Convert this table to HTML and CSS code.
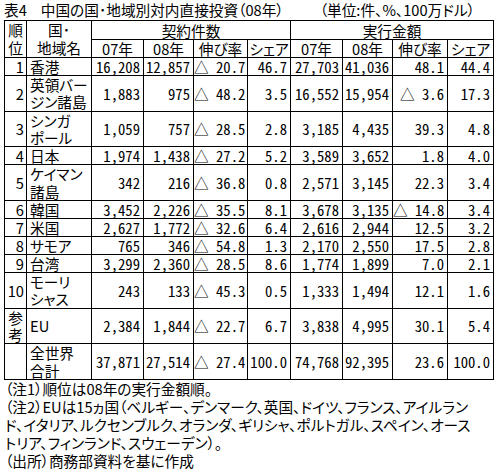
FILE: index.html
```html
<!DOCTYPE html>
<html lang="ja">
<head>
<meta charset="utf-8">
<title>表4 中国の国・地域別対内直接投資</title>
<link rel="stylesheet" href="styles.css">
</head>
<body>
<div class="page">
  <div class="title">
    <span class="tno">表4</span>
    <span class="main">中国の国･地域別対内直接投資（08年）</span>
    <span class="unit">（単位:件、%、100万ドル）</span>
  </div>
  <table class="tbl">
    <colgroup>
      <col class="w-rank"><col class="w-name">
      <col class="w-a"><col class="w-b"><col class="w-c"><col class="w-d">
      <col class="w-e"><col class="w-f"><col class="w-g"><col class="w-h">
    </colgroup>
    <thead>
      <tr class="h1">
        <th rowspan="2" class="two">順<br>位</th>
        <th rowspan="2" class="two">国･<br>地域名</th>
        <th colspan="4">契約件数</th>
        <th colspan="4">実行金額</th>
      </tr>
      <tr class="h2">
        <th>07年</th><th>08年</th><th>伸び率</th><th>シェア</th>
        <th>07年</th><th>08年</th><th>伸び率</th><th>シェア</th>
      </tr>
    </thead>
    <tbody>
      <tr class="s"><td class="rk">1</td><td class="nm">香港</td><td class="n">16,208</td><td class="n">12,857</td><td class="n">△ 20.7</td><td class="n">46.7</td><td class="n">27,703</td><td class="n">41,036</td><td class="n">48.1</td><td class="n">44.4</td></tr>
      <tr class="d"><td class="rk">2</td><td class="nm">英領バー<br>ジン諸島</td><td class="n">1,883</td><td class="n">975</td><td class="n">△ 48.2</td><td class="n">3.5</td><td class="n">16,552</td><td class="n">15,954</td><td class="n">△ 3.6</td><td class="n">17.3</td></tr>
      <tr class="d"><td class="rk">3</td><td class="nm">シンガ<br>ポール</td><td class="n">1,059</td><td class="n">757</td><td class="n">△ 28.5</td><td class="n">2.8</td><td class="n">3,185</td><td class="n">4,435</td><td class="n">39.3</td><td class="n">4.8</td></tr>
      <tr class="s"><td class="rk">4</td><td class="nm">日本</td><td class="n">1,974</td><td class="n">1,438</td><td class="n">△ 27.2</td><td class="n">5.2</td><td class="n">3,589</td><td class="n">3,652</td><td class="n">1.8</td><td class="n">4.0</td></tr>
      <tr class="d"><td class="rk">5</td><td class="nm">ケイマン<br>諸島</td><td class="n">342</td><td class="n">216</td><td class="n">△ 36.8</td><td class="n">0.8</td><td class="n">2,571</td><td class="n">3,145</td><td class="n">22.3</td><td class="n">3.4</td></tr>
      <tr class="s"><td class="rk">6</td><td class="nm">韓国</td><td class="n">3,452</td><td class="n">2,226</td><td class="n">△ 35.5</td><td class="n">8.1</td><td class="n">3,678</td><td class="n">3,135</td><td class="n">△ 14.8</td><td class="n">3.4</td></tr>
      <tr class="s"><td class="rk">7</td><td class="nm">米国</td><td class="n">2,627</td><td class="n">1,772</td><td class="n">△ 32.6</td><td class="n">6.4</td><td class="n">2,616</td><td class="n">2,944</td><td class="n">12.5</td><td class="n">3.2</td></tr>
      <tr class="s"><td class="rk">8</td><td class="nm">サモア</td><td class="n">765</td><td class="n">346</td><td class="n">△ 54.8</td><td class="n">1.3</td><td class="n">2,170</td><td class="n">2,550</td><td class="n">17.5</td><td class="n">2.8</td></tr>
      <tr class="s"><td class="rk">9</td><td class="nm">台湾</td><td class="n">3,299</td><td class="n">2,360</td><td class="n">△ 28.5</td><td class="n">8.6</td><td class="n">1,774</td><td class="n">1,899</td><td class="n">7.0</td><td class="n">2.1</td></tr>
      <tr class="d"><td class="rk">10</td><td class="nm">モーリ<br>シャス</td><td class="n">243</td><td class="n">133</td><td class="n">△ 45.3</td><td class="n">0.5</td><td class="n">1,333</td><td class="n">1,494</td><td class="n">12.1</td><td class="n">1.6</td></tr>
      <tr class="d"><td class="rk ref">参<br>考</td><td class="nm">EU</td><td class="n">2,384</td><td class="n">1,844</td><td class="n">△ 22.7</td><td class="n">6.7</td><td class="n">3,838</td><td class="n">4,995</td><td class="n">30.1</td><td class="n">5.4</td></tr>
      <tr class="d"><td class="rk"></td><td class="nm">全世界<br>合計</td><td class="n">37,871</td><td class="n">27,514</td><td class="n">△ 27.4</td><td class="n">100.0</td><td class="n">74,768</td><td class="n">92,395</td><td class="n">23.6</td><td class="n">100.0</td></tr>
    </tbody>
  </table>
  <div class="notes">
    <p>（注1）順位は08年の実行金額順。</p>
    <p>（注2）EUは15ヵ国（ベルギー、デンマーク、英国、ドイツ、フランス、アイルラン</p>
    <p>ド、イタリア、ルクセンブルク、オランダ、ギリシャ、ポルトガル、スペイン、オース</p>
    <p>トリア、フィンランド、スウェーデン）。</p>
    <p>（出所）商務部資料を基に作成</p>
  </div>
</div>
</body>
</html>
```

FILE: styles.css
```css
html, body {
  margin: 0;
  padding: 0;
  background: #fff;
}

body {
  color: #000;
  font-family: "Noto Sans CJK JP", sans-serif;
  font-size: 14.67px;
  font-feature-settings: "palt";
}

.page {
  padding: 1px 0 0 4px;
  width: 490px;
}

.title {
  display: flex;
  height: 19px;
  line-height: 18px;
  white-space: nowrap;
}

.title .main {
  margin-left: 14px;
}

.title .unit {
  margin-left: 36px;
}

.tbl {
  border-collapse: collapse;
  table-layout: fixed;
  width: 490px;
}

.w-rank { width: 22px; }
.w-name { width: 65px; }
.w-a { width: 52px; }
.w-b { width: 50px; }
.w-c { width: 54px; }
.w-d { width: 43px; }
.w-e { width: 52px; }
.w-f { width: 50px; }
.w-g { width: 55px; }
.w-h { width: 46px; }

.tbl th,
.tbl td {
  border: 1px solid #000;
  padding: 0;
  line-height: 17px;
  font-weight: normal;
  vertical-align: middle;
  white-space: nowrap;
  overflow: hidden;
}

.tbl th {
  text-align: center;
}

.tbl th.two {
  line-height: 18px;
}

.tbl tr.h1 { height: 19px; }
.tbl tr.h2 { height: 18px; }
.tbl tr.s { height: 17.7px; }
.tbl tr.d { height: 35.7px; }

.tbl tr.d td {
  line-height: 17.3px;
}

.tbl td.rk {
  text-align: right;
  padding-right: 2px;
}

.tbl td.rk.ref {
  text-align: center;
  padding: 0;
}

.tbl td.nm {
  text-align: left;
  padding-left: 3px;
}

.tbl td.n {
  text-align: right;
  padding-right: 3px;
  font-family: "Noto Sans Mono CJK JP", "Noto Sans CJK JP", monospace;
}

.notes {
  line-height: 18px;
  padding-left: 1px;
}

.notes p {
  margin: 0;
  white-space: nowrap;
}
```
